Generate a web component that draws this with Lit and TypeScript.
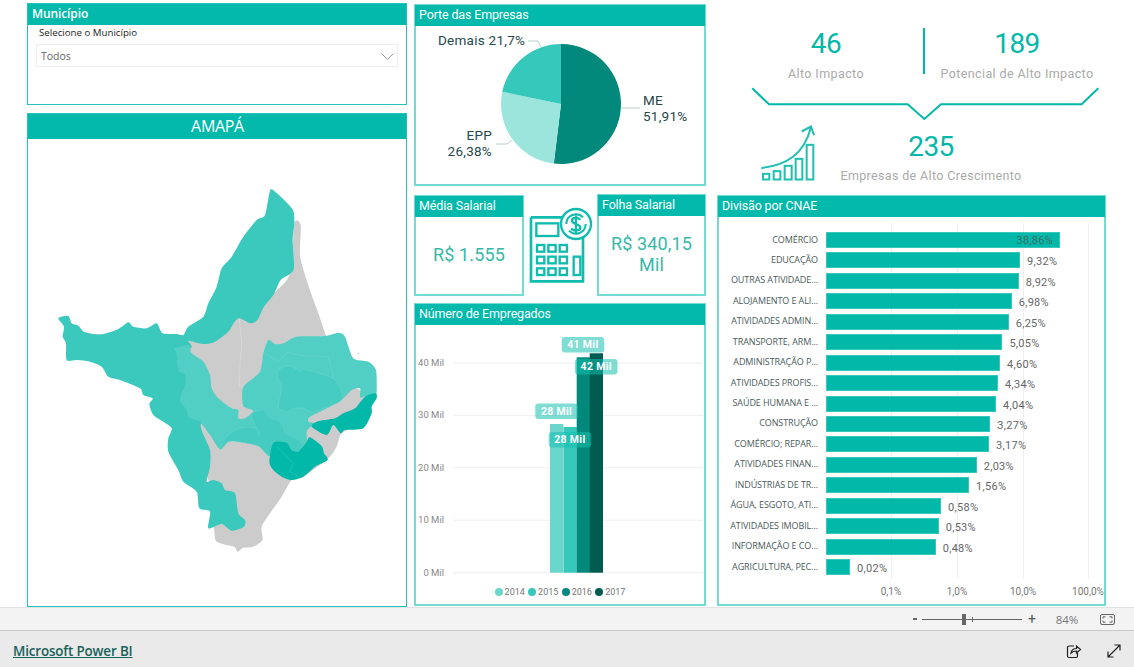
import { LitElement, html, css, svg } from "lit";
import { customElement } from "lit/decorators.js";

const BARS: [string, string, number][] = [
  ["COMÉRCIO", "38,86%", 234.5],
  ["EDUCAÇÃO", "9,32%", 194.3],
  ["OUTRAS ATIVIDADE...", "8,92%", 193],
  ["ALOJAMENTO E ALI...", "6,98%", 186],
  ["ATIVIDADES ADMIN...", "6,25%", 183],
  ["TRANSPORTE, ARM...", "5,05%", 176.7],
  ["ADMINISTRAÇÃO P...", "4,60%", 174.3],
  ["ATIVIDADES PROFIS...", "4,34%", 172.3],
  ["SAÚDE HUMANA E ...", "4,04%", 170.3],
  ["CONSTRUÇÃO", "3,27%", 164.6],
  ["COMÉRCIO; REPAR...", "3,17%", 163.4],
  ["ATIVIDADES FINAN...", "2,03%", 151],
  ["INDÚSTRIAS DE TR...", "1,56%", 143.4],
  ["ÁGUA, ESGOTO, ATI...", "0,58%", 115.4],
  ["ATIVIDADES IMOBIL...", "0,53%", 113],
  ["INFORMAÇÃO E CO...", "0,48%", 110],
  ["AGRICULTURA, PEC...", "0,02%", 24.4],
];

const TICKS = [
  ["0,1%", 172],
  ["1,0%", 238],
  ["10,0%", 304],
  ["100,0%", 369],
] as [string, number][];

const pieSlice = (from: number, to: number, fill: string) => {
  const cx = 561, cy = 104, r = 60;
  const pt = (f: number) => {
    const a = f * 2 * Math.PI;
    return `${cx + r * Math.sin(a)} ${cy - r * Math.cos(a)}`;
  };
  const large = to - from > 0.5 ? 1 : 0;
  return svg`<path d="M${cx} ${cy}L${pt(from)}A${r} ${r} 0 ${large} 1 ${pt(to)}Z" fill=${fill}></path>`;
};

const COLUMNS: [number, number, string][] = [
  [550, 424, "#6bd6cc"],
  [563.5, 427, "#36c8bb"],
  [576.7, 357.3, "#03897b"],
  [589.7, 353.3, "#005b51"],
];
const COL_LABELS: [number, number, string][] = [
  [561.7, 337, "41 Mil"],
  [575, 359, "42 Mil"],
  [535.3, 403.5, "28 Mil"],
  [548.7, 432, "28 Mil"],
];
const Y_TICKS: [string, number][] = [
  ["40 Mil", 363],
  ["30 Mil", 415.3],
  ["20 Mil", 467.7],
  ["10 Mil", 520.2],
  ["0 Mil", 572.7],
];

/** Closed curve passing through every point of a "x,y x,y" outline. */
const smooth = (pts: string, dx = 0, dy = 0) => {
  const p = pts.trim().split(/\s+/).map((s) => {
    const [x, y] = s.split(",").map(Number);
    return [x + dx, y + dy];
  });
  const n = p.length;
  const k = 1 / 8;
  let d = `M${p[0][0]} ${p[0][1]}`;
  for (let i = 0; i < n; i++) {
    const p0 = p[(i + n - 1) % n], p1 = p[i], p2 = p[(i + 1) % n], p3 = p[(i + 2) % n];
    d += `C${p1[0] + (p2[0] - p0[0]) * k} ${p1[1] + (p2[1] - p0[1]) * k} ${p2[0] - (p3[0] - p1[0]) * k} ${p2[1] - (p3[1] - p1[1]) * k} ${p2[0]} ${p2[1]}`;
  }
  return d + "Z";
};

const GREY = "763,130 782,135 780,225 795,285 815,345 835,400 858,468 900,600 960,630 990,660 960,730 905,760 890,800 862,838 790,890 755,900 725,950 690,1000 665,1040 667,1080 640,1100 610,1103 592,1115 582,1100 530,1085 522,1045 505,900 470,760 420,500 600,410 700,340 750,280";
const TEAL = "690,32 705,35 735,62 760,92 763,130 758,180 762,262 750,282 722,300 700,345 672,380 652,420 632,430 598,415 582,428 565,455 525,485 490,492 445,482 455,500 430,530 435,575 452,595 447,620 432,640 437,670 452,690 457,710 490,722 482,735 488,760 510,810 510,860 500,905 520,900 545,910 555,930 585,940 595,1000 615,1020 612,1040 575,1052 545,1032 505,1045 510,995 478,985 470,935 430,905 415,870 385,815 385,775 395,745 370,725 340,705 328,672 338,655 310,645 300,625 240,600 205,590 185,560 150,545 110,540 80,540 78,490 68,470 72,440 55,415 85,408 95,430 115,437 135,457 185,463 235,447 265,427 280,440 320,445 350,430 368,460 410,462 430,465 445,440 490,410 505,370 530,320 545,265 575,230 610,170 650,120 675,105";
const LIGHT = "40,75 50,100 85,125 105,165 110,205 130,235 170,265 190,270 190,295 210,295 235,272 205,258 202,210 215,190 255,155 265,100 280,60 300,72 325,70 365,50 450,48 490,38 510,50 535,115 580,125 603,150 605,215 600,222 565,230 555,232 555,205 530,210 505,235 465,260 405,290 400,305 415,310 395,335 395,365 370,395 355,398 335,370 295,368 283,408 250,378 190,365 160,365 135,388 105,345 75,305 60,300 40,290 35,270 15,240 30,195 30,165 10,150 5,100 0,85";
const CENTER = "310,150 340,137 375,152 385,147 478,178 503,235 465,258 410,275 385,265 355,265 340,275 310,262 320,205 308,170";
const BAND = "135,388 155,350 195,325 240,325 255,345 230,285 265,270 285,295 310,300 325,320 330,340 365,355 385,375 370,395 355,398 335,370 295,368 283,408 250,378 190,365 160,365";
const COAST = "602,220 605,235 590,260 590,280 565,325 510,330 497,340 475,315 455,345 410,320 425,305 480,295 505,280 540,265 570,230";
const SOUTH = "283,425 295,368 335,368 350,390 370,395 395,365 405,352 440,378 447,400 458,420 420,440 385,470 350,480 320,470 295,450";

@customElement("app-root")
export class AppRoot extends LitElement {
  static styles = css`
    :host { display: block; width: 1134px; height: 667px; overflow: hidden; background: #fff; font-family: "Open Sans", "Noto Sans", sans-serif; }
    .page { display: flex; flex-direction: column; height: 667px; }
    .canvas { height: 607px; flex: none; display: grid; grid-template-columns: 380px 292px 393px; column-gap: 7px; padding-left: 27px; box-sizing: border-box; }
    .col { display: flex; flex-direction: column; height: 607px; box-sizing: border-box; }
    .col1 { padding-top: 3px; gap: 8px; }
    .col2 { padding-top: 4px; }
    .col3 { margin-left: 4px; }
    .panel { border: 2px solid #74dbd2; box-sizing: border-box; display: flex; flex-direction: column; background: #fff; min-width: 0; }
    .panel.strong { border-width: 1px; border-color: #1fc5b8; }
    .head { background: #02b9ab; color: #fff; height: 21px; flex: none; margin: -1px -1px 0; padding-left: 4px; font: 400 12.5px/19px Roboto, sans-serif; letter-spacing: -.15px; }
    .strong .head { margin: 0; }
    .head.seg { font: 600 12px/20px "Open Sans", sans-serif; letter-spacing: -.1px; padding-left: 4px; }
    .head.big { height: 25px; font: 400 16px/25px "Open Sans", sans-serif; text-align: center; letter-spacing: -.3px; padding: 0 0 0 1px; }
    .muni { height: 102px; }
    .muni .sub { font-size: 9.7px; line-height: 14px; color: #222; padding-left: 11px; margin-top: 1px; }
    .select { margin: 4px 8px 0; height: 23px; box-sizing: border-box; border: 1px solid #eee; display: flex; align-items: center; justify-content: space-between; padding: 1px 3px 0 4px; font-size: 10.5px; color: #666; }
    .select svg { width: 13px; height: 7px; }
    .map { flex: 1; }
    .mapbox { padding: 41px 0 0 12px; }
    .mapbox svg { display: block; width: 350px; height: 380px; }
    .porte { height: 182px; }
    .chart { display: block; }
    .ptxt { font: 400 13.5px Roboto, sans-serif; fill: #26484a; letter-spacing: .25px; }
    .row { display: flex; align-items: flex-start; margin-top: 8px; height: 102px; }
    .mini { width: 110px; height: 101px; margin-top: 1px; flex: none; }
    .mini.fo { width: 109px; margin: 0 0 0 -1px; height: 102px; }
    .val { flex: 1; display: flex; align-items: center; justify-content: center; text-align: center; font: 400 18px/21px Roboto, sans-serif; letter-spacing: .15px; color: #37b9a9; padding-bottom: 2px; }
    .calc { width: 72px; height: 84px; margin: 10px 0 0 2px; flex: none; }
    .emp { margin-top: 7px; height: 303px; }
    .ytxt { font: 400 9.5px Roboto, sans-serif; fill: #888; }
    .ltxt { font: 700 10.5px Roboto, sans-serif; fill: #fff; letter-spacing: .3px; }
    .legend { display: flex; justify-content: center; gap: 3.3px; font: 400 9px/12px Roboto, sans-serif; color: #777; margin-top: 6px; }
    .legend span { display: flex; align-items: center; gap: 2px; }
    .legend i { width: 8px; height: 8px; border-radius: 50%; display: block; }
    .kpis { height: 195px; flex: none; display: flex; flex-direction: column; }
    .kpirow { display: grid; grid-template-columns: 182px 2px 172px; column-gap: 6px; padding: 28px 0 0 18px; height: 46px; }
    .kpi { display: flex; flex-direction: column; align-items: center; }
    .num { font: 400 28px/31px Roboto, sans-serif; color: #02b8a9; letter-spacing: -.5px; }
    .lab { font: 400 12.5px/16px Roboto, sans-serif; color: #aaa; letter-spacing: .4px; white-space: nowrap; margin-top: 7px; }
    .divider { background: #02b8a9; height: 46px; }
    .brace { display: block; width: 350px; height: 34px; margin: 13px 0 0 34px; }
    .kpi3 { display: flex; margin-top: 3px; }
    .grow { width: 55px; height: 57px; margin-left: 44px; flex: none; }
    .kpi3 .kpi { margin-left: 25px; width: 180px; padding-top: 7px; }
    .kpi3 .lab { margin-top: 6px; letter-spacing: .35px; }
    .cnae { flex: 1; margin-bottom: 1px; }
    .plot { position: relative; flex: 1; padding: 15px 0 0 2px; }
    .bars { display: grid; grid-auto-rows: 16px; row-gap: 4.44px; position: relative; }
    .bar { display: flex; align-items: center; }
    .blabel { width: 97px; margin-right: 7.7px; flex: none; text-align: right; font-size: 9px; line-height: 12px; padding-bottom: 1px; letter-spacing: -.1px; color: #4a5a5a; white-space: nowrap; }
    .fill { height: 16px; background: #02b8a9; box-shadow: inset 0 0 0 1px #35c8bc; flex: none; }
    .bval { font: 400 11px Roboto, sans-serif; color: #666; letter-spacing: .3px; margin-left: 7px; padding-top: 3px; }
    .fill.inside { display: flex; justify-content: flex-end; align-items: center; }
    .fill.inside .bval { color: #3a7068; margin: 0 7px 0 0; padding-top: 1px; }
    .gl { position: absolute; top: 6px; height: 356px; width: 1px; background: #eee; }
    .tick { position: absolute; top: 369px; transform: translateX(-50%); font: 400 10px Roboto, sans-serif; color: #777; }
    .status { height: 24px; flex: none; background: #f3f3f3; border-top: 1px solid #e2e2e2; border-bottom: 1px solid #c8c8c8; box-sizing: border-box; display: flex; align-items: center; justify-content: flex-end; color: #777; }
    .status .minus { width: 4px; height: 2px; background: #666; margin-right: 5px; }
    .slider { width: 100px; height: 1px; background: #666; position: relative; }
    .thumb { position: absolute; left: 40px; top: -5px; width: 4px; height: 11px; background: #666; }
    .mark { position: absolute; left: 50px; top: -2px; width: 1px; height: 5px; background: #666; }
    .plus { margin-left: 6px; font: 400 14px/14px Roboto, sans-serif; color: #555; }
    .pct { font-size: 11.5px; margin-left: 13px; width: 36px; text-align: center; }
    .fit { width: 15px; height: 11px; margin: 0 19px 0 15px; }
    .foot { flex: 1; background: #eaeaea; display: flex; align-items: center; padding: 3px 12px 0 13px; }
    .foot a { font: 600 13.4px "Open Sans", sans-serif; color: #17625c; text-decoration: underline; letter-spacing: -.15px; }
    .foot svg { width: 16px; height: 16px; display: block; }
    .foot .sp { flex: 1; }
    .foot .share { margin-right: 24px; }
  `;

  private map() {
    return svg`<svg viewBox="0 0 1050 1140">
      <path fill="#cccccc" d=${smooth(GREY)}></path>
      <path fill="#3cc9bd" d=${smooth(TEAL)}></path>
      <path fill="#52cfc4" d=${smooth(LIGHT, 405, 420)}></path>
      <path fill="#47ccc1" stroke="#6dd7cd" stroke-width="1.5" d=${smooth(CENTER, 405, 420)}></path>
      <path fill="#45cbc0" stroke="#6dd7cd" stroke-width="1" d=${smooth(BAND, 405, 420)}></path>
      <g fill="none" stroke="#6dd7cd" stroke-width="1.5">
        <path d="M675 520L715 545L740 517L790 527L865 530L883 598"></path>
      </g>
      <path d="M598 415L605 490L597 600L600 620" fill="none" stroke="#dcdcdc" stroke-width="2"></path>
      <path fill="#02b8a9" d=${smooth(COAST, 405, 420)}></path>
      <path fill="#02b8a9" d=${smooth(SOUTH, 405, 420)}></path>
      <path d="M710 798L760 850L750 875L775 890" fill="none" stroke="#35c8bc" stroke-width="1.5"></path>
      <circle cx="955" cy="520" r="2" fill="#52cfc4"></circle>
    </svg>`;
  }

  private pie() {
    return svg`<svg class="chart" width="288" height="158" viewBox="416 26 288 158">
      ${pieSlice(0, 0.5191, "#03897b")}
      ${pieSlice(0.5191, 0.7829, "#9ce5dd")}
      ${pieSlice(0.7829, 1, "#36c8bb")}
      <g fill="none" stroke="#b5cfcc" stroke-width="1">
        <path d="M528 41H538L541 47"></path>
        <path d="M621 108H640"></path>
        <path d="M496 144H507L512 140"></path>
      </g>
      <text class="ptxt" x="438" y="45">Demais 21,7%</text>
      <text class="ptxt" x="643" y="105">ME</text>
      <text class="ptxt" x="643" y="121">51,91%</text>
      <text class="ptxt" x="492" y="140" text-anchor="end">EPP</text>
      <text class="ptxt" x="492" y="156" text-anchor="end">26,38%</text>
    </svg>`;
  }

  private columns() {
    return svg`<svg class="chart" width="288" height="255" viewBox="416 325 288 255">
      ${Y_TICKS.map(([t, y]) => svg`
        <rect x="453" y=${y - 0.5} width="250" height="1" fill="#eeeeee"></rect>
        <text class="ytxt" x="444" y=${y + 3} text-anchor="end">${t}</text>`)}
      ${COLUMNS.map(([x, top, c]) => svg`<rect x=${x} y=${top} width="13.3" height=${572.7 - top} fill=${c}></rect>`)}
      ${COL_LABELS.map(([x, y, t]) => svg`
        <rect x=${x} y=${y} width="42.5" height="15.4" rx="3" fill="rgba(18,192,176,.54)"></rect>
        <text class="ltxt" x=${x + 21.2} y=${y + 11.4} text-anchor="middle">${t}</text>`)}
    </svg>`;
  }

  private calc() {
    return svg`<svg class="calc" viewBox="0 0 216 252" fill="none" stroke="#0fbcae" stroke-width="8">
      <path d="M15 40H115M15 40V232H171V92"></path>
      <rect x="31" y="58" width="66" height="38" stroke-width="7"></rect>
      ${[33, 67, 101].flatMap((x) => [123, 158, 193].map((y) => svg`<rect x=${x} y=${y} width="22" height="20" stroke-width="7"></rect>`))}
      <rect x="143" y="158" width="20" height="55" stroke-width="7"></rect>
      <circle cx="150" cy="60" r="45" fill="#fff" stroke-width="7"></circle>
      <path d="M121 60A29 29 0 0 1 171 40M179 60A29 29 0 0 1 129 80" stroke-width="6"></path>
      <path d="M162 48C158 39 138 40 138 50C138 62 163 58 163 71C163 81 141 82 136 73M150 34V88" stroke-width="7"></path>
    </svg>`;
  }

  private grow() {
    return svg`<svg class="grow" viewBox="140 372 165 170" fill="none" stroke="#1fbfb2" stroke-width="6">
      <rect x="146" y="521" width="19" height="17"></rect>
      <rect x="178" y="513" width="20" height="25"></rect>
      <rect x="211" y="497" width="21" height="41"></rect>
      <rect x="244" y="476" width="20" height="62"></rect>
      <rect x="277" y="434" width="20" height="104"></rect>
      <path d="M141 504C215 495 268 465 290 381"></path>
      <path d="M262 394L290 379L299 405"></path>
    </svg>`;
  }

  render() {
    return html`<div class="page">
      <div class="canvas">
        <div class="col col1">
          <section class="panel strong muni">
            <div class="head seg">Município</div>
            <div class="sub">Selecione o Município</div>
            <div class="select">Todos
              <svg viewBox="0 0 13 7" fill="none" stroke="#999"><path d="M.5 .5L6.500 6.500L12.500 .5"></path></svg>
            </div>
          </section>
          <section class="panel strong map">
            <div class="head big">AMAPÁ</div>
            <div class="mapbox">${this.map()}</div>
          </section>
        </div>
        <div class="col col2">
          <section class="panel porte">
            <div class="head">Porte das Empresas</div>
            ${this.pie()}
          </section>
          <div class="row">
            <section class="panel mini"><div class="head">Média Salarial</div><div class="val">R$ 1.555</div></section>
            ${this.calc()}
            <section class="panel mini fo"><div class="head">Folha Salarial</div><div class="val">R$ 340,15<br />Mil</div></section>
          </div>
          <section class="panel emp">
            <div class="head">Número de Empregados</div>
            ${this.columns()}
            <div class="legend">
              ${[["2014", "#6bd6cc"], ["2015", "#36c8bb"], ["2016", "#03897b"], ["2017", "#005b51"]].map(
                ([y, c]) => html`<span><i style="background:${c}"></i>${y}</span>`
              )}
            </div>
          </section>
        </div>
        <div class="col col3">
          <div class="kpis">
            <div class="kpirow">
              <div class="kpi"><div class="num">46</div><div class="lab">Alto Impacto</div></div>
              <div class="divider"></div>
              <div class="kpi"><div class="num">189</div><div class="lab">Potencial de Alto Impacto</div></div>
            </div>
            <svg class="brace" viewBox="751 88 350 34" fill="none" stroke="#02b8a9" stroke-width="2">
              <path d="M752.3 89.3L769 105.3H907.7L924.3 120L941 105.3H1081.7L1098.3 89.3"></path>
            </svg>
            <div class="kpi3">
              ${this.grow()}
              <div class="kpi"><div class="num">235</div><div class="lab">Empresas de Alto Crescimento</div></div>
            </div>
          </div>
          <section class="panel cnae">
            <div class="head">Divisão por CNAE</div>
            <div class="plot">
              ${TICKS.map(([t, x]) => html`<div class="gl" style="left:${x}px"></div><div class="tick" style="left:${x}px">${t}</div>`)}
              <div class="bars">
                ${BARS.map(([l, v, w], i) => html`<div class="bar">
                  <div class="blabel">${l}</div>
                  ${i === 0
                    ? html`<div class="fill inside" style="width:${w}px"><span class="bval">${v}</span></div>`
                    : html`<div class="fill" style="width:${w}px"></div><span class="bval">${v}</span>`}
                </div>`)}
              </div>
            </div>
          </section>
        </div>
      </div>
      <div class="status">
        <div class="minus"></div>
        <div class="slider"><div class="thumb"></div><div class="mark"></div></div>
        <div class="plus">+</div>
        <div class="pct">84%</div>
        <svg class="fit" viewBox="0 0 15 11" fill="none" stroke="#666"><rect x=".5" y=".5" width="14" height="10" rx="1.5"></rect><path d="M3 4.5V2.8H5.5M12 4.5V2.8H9.5M3 6.5V8.2H5.5M12 6.5V8.2H9.5"></path></svg>
      </div>
      <div class="foot">
        <a>Microsoft Power BI</a>
        <div class="sp"></div>
        <svg class="share" viewBox="0 0 16 16" fill="none" stroke="#222" stroke-width="1.2"><path d="M8 3H3A1.5 1.5 0 0 0 1.500 4.500V13A1.500 1.500 0 0 0 3 14.500H10A1.500 1.500 0 0 0 11.500 13V10"></path><path d="M5 10C5.500 7 8 5.500 10.500 5.500V3L14.500 6.500L10.500 10V8C8 8 6.500 8.500 5 10Z"></path></svg>
        <svg viewBox="0 0 16 16" fill="none" stroke="#222" stroke-width="1.2"><path d="M2 14L14 2M8.500 2H14V7.500M2 8.500V14H7.500"></path></svg>
      </div>
    </div>`;
  }
}
